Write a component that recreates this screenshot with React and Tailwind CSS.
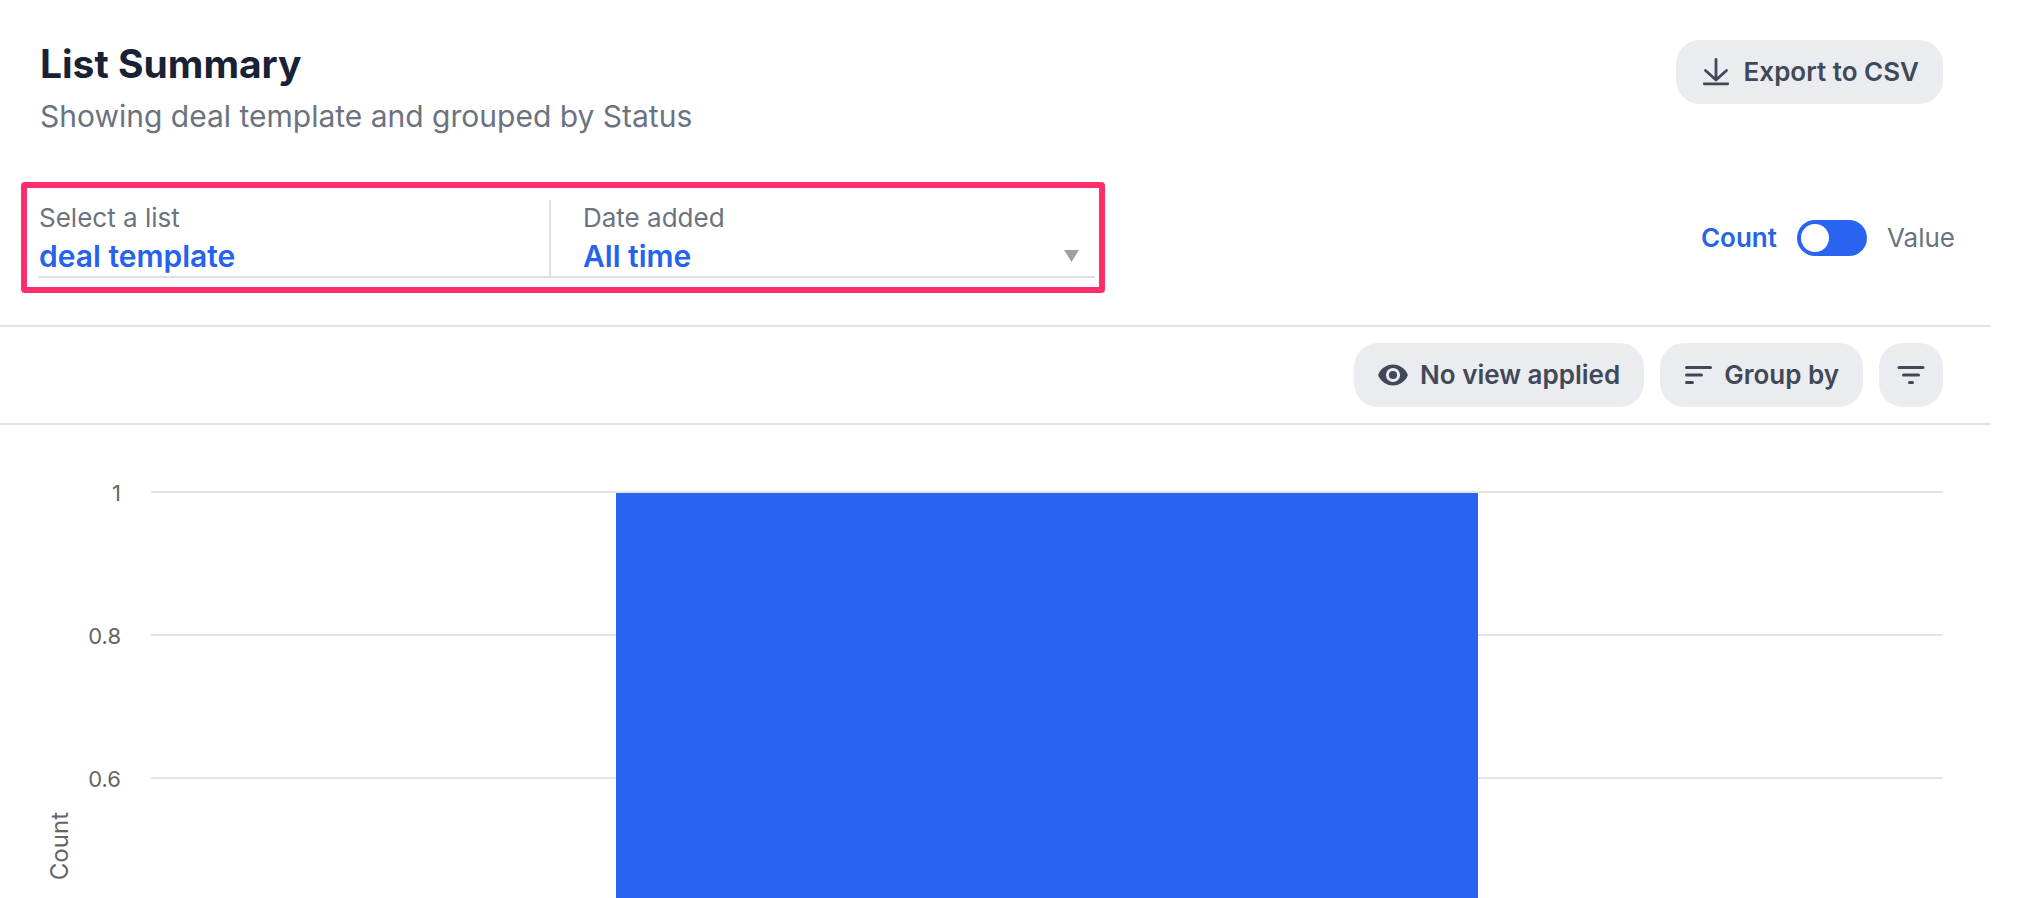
import { useState } from "react";

const TICKS = ["1", "0.8", "0.6"];

function DownloadIcon() {
  return (
    <svg width="32" height="28" viewBox="-2 0 32 28" fill="none" stroke="currentColor" strokeWidth="2.800" strokeLinecap="round" strokeLinejoin="round" aria-hidden="true">
      <path d="M14 1.500v20.500M3.500 12.500 14 22l10.500-9.500M2.200 25.800h23.600" />
    </svg>
  );
}

function EyeIcon() {
  return (
    <svg width="30" height="22" viewBox="0 0 30 22" aria-hidden="true">
      <path fill="currentColor" fillRule="evenodd" d="M15 .5C22 .5 27.500 5 29.600 10.200q.3.800 0 1.600C27.500 17 22 21.500 15 21.500S2.500 17 .4 11.800q-.3-.8 0-1.600C2.500 5 8 .5 15 .5Zm0 3.400a7.100 7.100 0 1 0 0 14.200 7.100 7.100 0 0 0 0-14.200Zm0 3a4.100 4.100 0 1 1 0 8.200 4.100 4.100 0 0 1 0-8.200Z" />
    </svg>
  );
}

function GroupIcon() {
  return (
    <svg width="28" height="20" viewBox="0 0 28 20" fill="none" stroke="currentColor" strokeWidth="3" strokeLinecap="round" aria-hidden="true">
      <path d="M2.500 2.500h24M2.500 10h15M2.500 17.500h6" />
    </svg>
  );
}

function FilterIcon() {
  return (
    <svg width="28" height="20" viewBox="0 0 28 20" fill="none" stroke="currentColor" strokeWidth="3" strokeLinecap="round" aria-hidden="true">
      <path d="M2 2.500h24M6.500 10h15M12.500 17.500h3" />
    </svg>
  );
}

function PillButton({ icon, children, ...rest }) {
  return (
    <button type="button" className="flex h-16 shrink-0 items-center gap-3 rounded-3xl bg-[#eaecef] px-6 text-[26px] font-semibold text-[#414958]" {...rest}>
      {icon}
      <span className="pb-0.5">{children}</span>
    </button>
  );
}

function Field({ id, label, options }) {
  return (
    <div className="flex min-w-0 flex-1 flex-col">
      <label htmlFor={id} className="text-[26px] leading-9 text-[#6b7280]">{label}</label>
      <select id={id} className="w-full cursor-pointer appearance-none bg-transparent text-[30px] leading-10 font-semibold text-[#2563eb] outline-none">
        {options.map((o) => (
          <option key={o}>{o}</option>
        ))}
      </select>
    </div>
  );
}

export default function App() {
  const [byValue, setByValue] = useState(false);
  return (
    <div className="flex h-screen flex-col overflow-hidden bg-white pr-[31px] font-['Inter',sans-serif]">
      <header className="flex items-start justify-between pt-10 pr-12 pl-10">
        <div>
          <h1 className="text-[39px] leading-[48px] font-bold text-[#182234]">List Summary</h1>
          <p className="mt-2 text-[30px] leading-10 text-[#6b7280]">Showing deal template and grouped by Status</p>
        </div>
        <PillButton icon={<DownloadIcon />}>Export to CSV</PillButton>
      </header>

      <section className="mt-[46px] flex items-center justify-between border-b-2 border-[#e3e3e3] pr-9 pb-8 pl-[21px]">
        <div className="w-[1084px] rounded-sm border-6 border-[#ff2d6b] pt-3 pr-1 pb-[9px] pl-3">
          <div className="grid grid-cols-[510px_1fr] border-b-2 border-[#dfe0e2]">
            <Field id="list" label="Select a list" options={["deal template"]} />
            <div className="flex items-end border-l-2 border-[#dfe0e2] pl-8">
              <Field id="date" label="Date added" options={["All time"]} />
              <svg className="mr-4 mb-3.5" width="15" height="12" viewBox="0 0 15 12" aria-hidden="true">
                <path fill="#9e9fa3" d="M0 0h15L7.500 12z" />
              </svg>
            </div>
          </div>
        </div>
        <label className="flex cursor-pointer items-center gap-5 text-[26px]">
          <span className="font-semibold text-[#2563eb]">Count</span>
          <input
            type="checkbox"
            role="switch"
            checked={byValue}
            onChange={(e) => setByValue(e.target.checked)}
            className="flex h-9 w-[70px] appearance-none items-center rounded-full bg-[#2864f0] px-1 before:size-7 before:rounded-full before:bg-white checked:justify-end"
          />
          <span className="text-[#6b7280]">Value</span>
        </label>
      </section>

      <nav className="flex justify-end gap-4 border-b-2 border-[#e3e3e3] py-4 pr-12" aria-label="View options">
        <PillButton icon={<EyeIcon />}>No view applied</PillButton>
        <PillButton icon={<GroupIcon />}>Group by</PillButton>
        <button type="button" aria-label="Filter" className="flex size-16 shrink-0 items-center justify-center rounded-3xl bg-[#eaecef] text-[#414958]">
          <FilterIcon />
        </button>
      </nav>

      <main className="flex min-h-0 flex-1 items-start overflow-hidden pt-[66px] pr-12 pl-11 text-[#666]">
        <div className="flex h-[710px] w-8 shrink-0 items-center justify-center">
          <span className="rotate-180 text-[24px] leading-8 [writing-mode:vertical-rl]">Count</span>
        </div>
        <div className="-mt-3 w-[45px] shrink-0 text-right text-[22px] leading-7">
          {TICKS.map((t) => (
            <div key={t} className="h-[143px]">{t}</div>
          ))}
        </div>
        <div className="ml-[30px] grid flex-1 grid-cols-1">
          <div className="col-start-1 row-start-1">
            {TICKS.map((t) => (
              <div key={t} className="h-[143px] border-t-2 border-[#e5e5e5]" />
            ))}
          </div>
          <div className="col-start-1 row-start-1 mt-0.5 w-[48.1%] justify-self-center bg-[#2864f0]" />
        </div>
      </main>
    </div>
  );
}
